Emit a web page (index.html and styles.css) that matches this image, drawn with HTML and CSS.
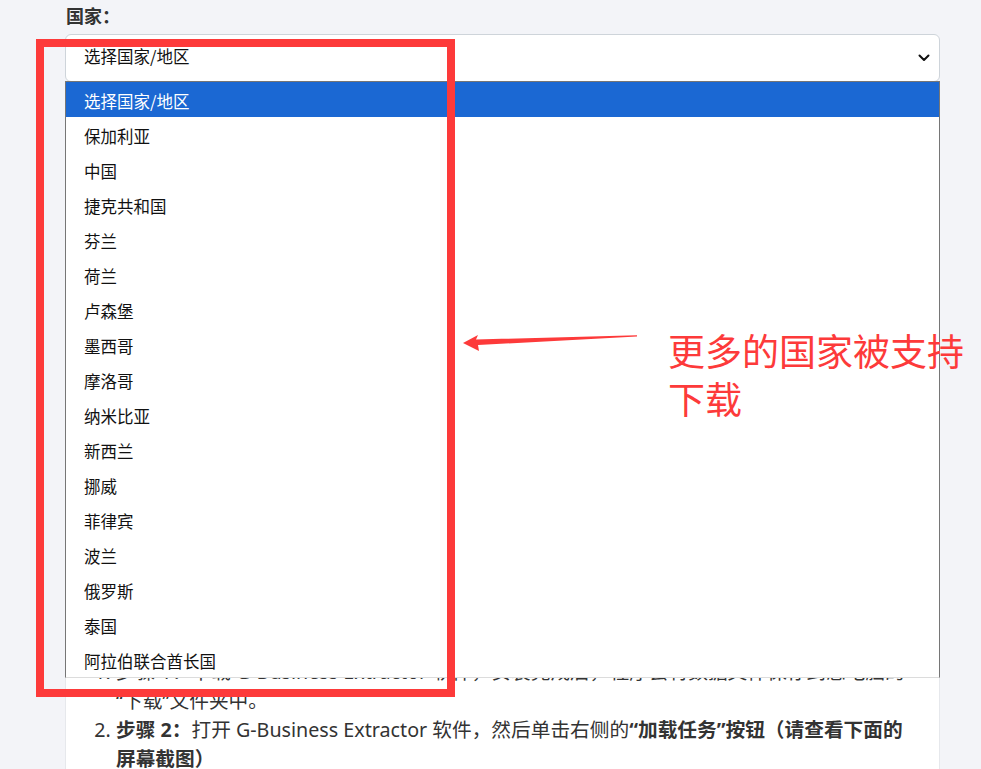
FILE: index.html
```html
<!DOCTYPE html>
<html lang="zh-CN">
<head>
<meta charset="utf-8">
<title>国家选择</title>
<link rel="stylesheet" href="styles.css">
</head>
<body>
<div class="page">
  <div class="field">
    <label class="field-label">国家：</label>
    <div class="select-wrap">
      <div class="select-box">
        <span class="select-value">选择国家/地区</span>
        <svg class="chevron" width="12" height="8" viewBox="0 0 12 8"><path d="M1.5 1.5l4.5 4.5 4.5-4.5" fill="none" stroke="#111" stroke-width="2" stroke-linecap="round" stroke-linejoin="round"/></svg>
      </div>
      <ul class="dropdown">
        <li class="opt active">选择国家/地区</li>
        <li class="opt">保加利亚</li>
        <li class="opt">中国</li>
        <li class="opt">捷克共和国</li>
        <li class="opt">芬兰</li>
        <li class="opt">荷兰</li>
        <li class="opt">卢森堡</li>
        <li class="opt">墨西哥</li>
        <li class="opt">摩洛哥</li>
        <li class="opt">纳米比亚</li>
        <li class="opt">新西兰</li>
        <li class="opt">挪威</li>
        <li class="opt">菲律宾</li>
        <li class="opt">波兰</li>
        <li class="opt">俄罗斯</li>
        <li class="opt">泰国</li>
        <li class="opt">阿拉伯联合酋长国</li>
      </ul>
    </div>
  </div>

  <div class="card">
    <h3 class="card-title">使用步骤</h3>
    <p class="card-intro">请按照以下步骤下载并导入数据。</p>
    <div class="shot"></div>
    <ol class="steps">
      <li>步骤 1：下载 G-Business Extractor 软件，安装完成后，程序会将数据文件保存到您电脑的“下载”文件夹中。</li>
      <li><b>步骤 2：</b>打开 G-Business Extractor 软件，然后单击右侧的<b>“加载任务”按钮（请查看下面的屏幕截图）</b></li>
    </ol>
  </div>

  <div class="highlight-box"></div>
  <svg class="arrow" width="190" height="30" viewBox="0 0 190 30">
    <polygon points="3,14 18,6 16,10.5 177,6.2 177,7.4 18,16 19,22" fill="#fd3a3a"/>
  </svg>
  <div class="note">更多的国家被支持<br>下载</div>
</div>
</body>
</html>
```

FILE: styles.css
```css
html, body {
  margin: 0;
  padding: 0;
  overflow: hidden;
}
body {
  background: #f3f4f8;
  font-family: "Noto Sans", "Noto Sans CJK SC", sans-serif;
  color: #333;
}
.page {
  position: relative;
  padding: 3px 41px 40px 65px;
}
.field-label {
  display: block;
  font-family: "Noto Sans CJK SC", sans-serif;
  font-weight: 700;
  font-size: 18px;
  line-height: 24px;
  padding-left: 1px;
  color: #333;
}
.select-wrap {
  position: relative;
  margin-top: 7px;
}
.select-box {
  box-sizing: border-box;
  height: 48px;
  background: #fff;
  border: 1px solid #ced4da;
  border-radius: 6px;
  display: flex;
  align-items: center;
  justify-content: space-between;
  padding: 0 9px 4px 18px;
}
.chevron {
  margin-top: 4px;
}
.select-value {
  font-family: "Noto Sans CJK SC", sans-serif;
  font-size: 16.5px;
  color: #111;
}
.dropdown {
  position: absolute;
  top: 47px;
  left: 0;
  right: 0;
  margin: 0;
  padding: 0;
  list-style: none;
  background: #fff;
  border: 1px solid #767676;
  border-bottom-color: #dcdcdc;
  z-index: 5;
}
.opt {
  height: 32px;
  line-height: 32px;
  padding: 3px 0 0 18px;
  font-family: "Noto Sans CJK SC", sans-serif;
  font-size: 16.5px;
  color: #111;
}
.opt.active {
  background: #1b68d3;
  color: #fff;
}
.card {
  margin-top: 16px;
  background: #fff;
  border: 1px solid #e6e8ec;
  padding: 20px 27px 20px 16px;
}
.card-title {
  margin: 0 0 12px;
  font-size: 18px;
  line-height: 29px;
}
.card-intro {
  margin: 0 0 16px;
  font-size: 17px;
  line-height: 29px;
}
.shot {
  height: 428px;
  margin-bottom: 24px;
  background: #eef0f4;
}
.steps {
  margin: 0;
  padding-left: 34px;
  font-size: 19.7px;
  line-height: 29px;
  color: #333;
}
.steps b {
  font-weight: 700;
}
.highlight-box {
  position: absolute;
  left: 36px;
  top: 39px;
  width: 419px;
  height: 658px;
  box-sizing: border-box;
  border: 8px solid #fd3a3a;
  z-index: 10;
}
.arrow {
  position: absolute;
  left: 460px;
  top: 329px;
  z-index: 10;
}
.note {
  position: absolute;
  left: 668px;
  top: 326px;
  font-family: "Noto Sans CJK SC", sans-serif;
  font-size: 37px;
  line-height: 48px;
  color: #fd3a3a;
  white-space: nowrap;
  z-index: 10;
}
```
